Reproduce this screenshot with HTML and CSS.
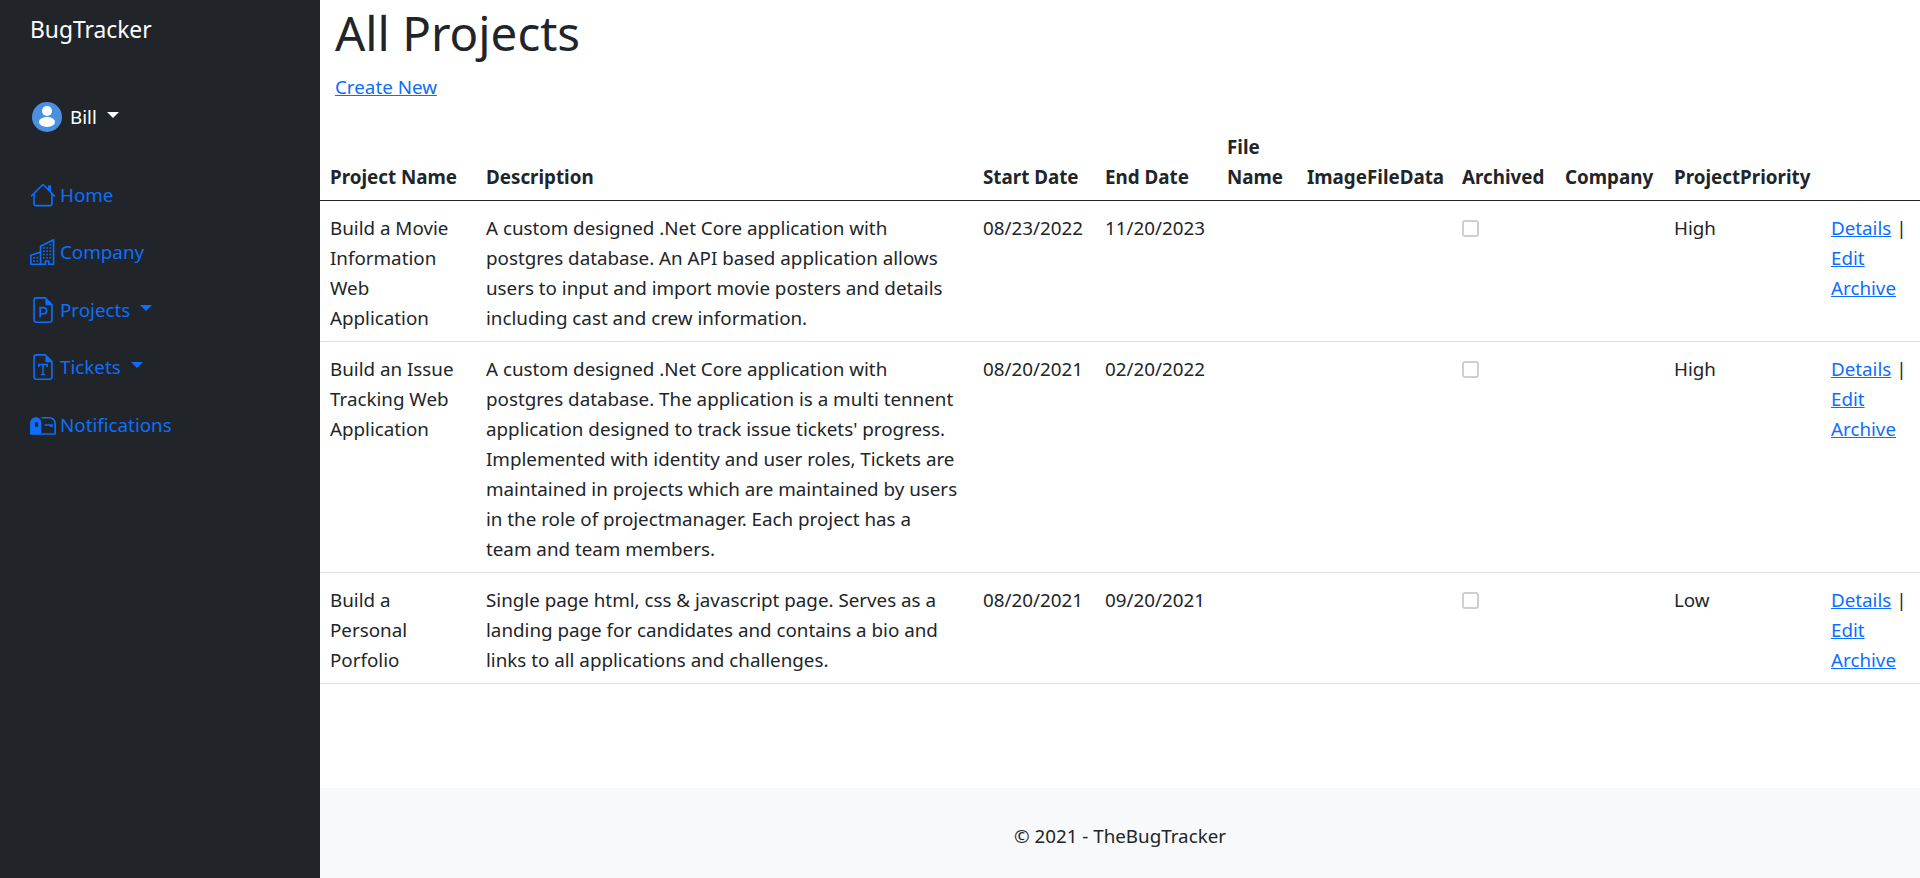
FILE: index.html
```html
<!DOCTYPE html>
<html lang="en">
<head>
    <meta charset="UTF-8">
    <title>All Projects - BugTracker</title>
    <link rel="stylesheet" href="styles.css">
</head>
<body>
    <div class="page">
        <nav class="sidebar">
            <div class="brand">BugTracker</div>
            <div class="user">
                <svg class="avatar" viewBox="0 0 30 30"><circle cx="15" cy="15" r="15" fill="#4a90e2"/><circle cx="15" cy="9" r="5" fill="#fff"/><ellipse cx="15" cy="20" rx="8" ry="5" fill="#fff"/></svg>
                <span>Bill</span><i class="caret"></i>
            </div>
            <ul class="menu">
                <li><svg viewBox="0 0 16 16" fill="currentColor"><path d="M8.707 1.500a1 1 0 0 0-1.414 0L.646 8.146a.5.5 0 0 0 .708.708L2 8.207V13.500A1.500 1.500 0 0 0 3.500 15h9a1.500 1.500 0 0 0 1.500-1.500V8.207l.646.647a.5.5 0 0 0 .708-.708L13 5.793V2.500a.5.5 0 0 0-.5-.5h-1a.5.5 0 0 0-.5.5v1.293L8.707 1.500ZM13 7.207V13.500a.5.5 0 0 1-.5.5h-9a.5.5 0 0 1-.5-.5V7.207l5-5 5 5Z"/></svg>Home</li>
                <li><svg viewBox="0 0 16 16" fill="currentColor"><path d="M14.763.075A.5.5 0 0 1 15 .5v15a.5.5 0 0 1-.5.5h-3a.5.5 0 0 1-.5-.5V14h-1v1.500a.5.5 0 0 1-.5.5h-9a.5.5 0 0 1-.5-.5V10a.5.5 0 0 1 .342-.474L6 7.640V4.500a.5.5 0 0 1 .276-.447l8-4a.5.5 0 0 1 .487.022ZM6 8.694 1 10.360V15h5V8.694ZM7 15h2v-1.500a.5.5 0 0 1 .5-.5h2a.5.5 0 0 1 .5.5V15h2V1.309l-7 3.500V15Z"/><path d="M2 11h1v1H2v-1Zm2 0h1v1H4v-1Zm-2 2h1v1H2v-1Zm2 0h1v1H4v-1Zm4-4h1v1H8V9Zm2 0h1v1h-1V9Zm-2 2h1v1H8v-1Zm2 0h1v1h-1v-1Zm2-2h1v1h-1V9Zm0 2h1v1h-1v-1ZM8 7h1v1H8V7Zm2 0h1v1h-1V7Zm2 0h1v1h-1V7ZM8 5h1v1H8V5Zm2 0h1v1h-1V5Zm2 0h1v1h-1V5Zm0-2h1v1h-1V3Z"/></svg>Company</li>
                <li><svg viewBox="0 0 16 16" fill="currentColor"><path d="M14 4.500V14a2 2 0 0 1-2 2H4a2 2 0 0 1-2-2V2a2 2 0 0 1 2-2h5.500L14 4.500ZM9.500 1H4a1 1 0 0 0-1 1v12a1 1 0 0 0 1 1h8a1 1 0 0 0 1-1V5H9.500V1Z"/><path d="M6.250 12.500V6.500H8.300a1.900 1.900 0 0 1 0 3.800H6.250" fill="none" stroke="currentColor"/></svg>Projects<i class="caret"></i></li>
                <li><svg viewBox="0 0 16 16" fill="currentColor"><path d="M14 4.500V14a2 2 0 0 1-2 2H4a2 2 0 0 1-2-2V2a2 2 0 0 1 2-2h5.500L14 4.500ZM9.500 1H4a1 1 0 0 0-1 1v12a1 1 0 0 0 1 1h8a1 1 0 0 0 1-1V5H9.500V1Z"/><path d="M5.400 8V6.500h5.200V8M8 6.500v6.200M6.700 12.700h2.600" fill="none" stroke="currentColor" stroke-width=".9"/></svg>Tickets<i class="caret"></i></li>
                <li><svg viewBox="0 0 16 16" fill="currentColor"><path fill-rule="evenodd" d="M4 3a4 4 0 0 0-4 4v6a1 1 0 0 0 1 1h6V7a4 4 0 0 0-3-4Zm0 3.200a1 1 0 0 1 1 1V9H3V7.200a1 1 0 0 1 1-1Z"/><path d="M6.600 3H12a4 4 0 0 1 4 4v6a1 1 0 0 1-1 1H7v-1h8V7a3 3 0 0 0-3-3H7.600a4.500 4.500 0 0 0-1-1Z"/><path d="M9 7.500h5v1.700h-1.300l-.8-.7H9Z"/></svg>Notifications</li>
            </ul>
        </nav>
        <div class="content">
            <main class="main">
                <h1>All Projects</h1>
                <p class="create"><a href="#">Create New</a></p>
                <table class="table">
                    <colgroup>
                        <col class="col-name">
                        <col class="col-desc">
                        <col class="col-date">
                        <col class="col-date">
                        <col class="col-file">
                        <col class="col-image">
                        <col class="col-archived">
                        <col class="col-company">
                        <col class="col-priority">
                        <col>
                    </colgroup>
                    <thead>
                        <tr>
                            <th>Project Name</th>
                            <th>Description</th>
                            <th>Start Date</th>
                            <th>End Date</th>
                            <th>File Name</th>
                            <th>ImageFileData</th>
                            <th>Archived</th>
                            <th>Company</th>
                            <th>ProjectPriority</th>
                            <th></th>
                        </tr>
                    </thead>
                    <tbody>
                        <tr>
                            <td>Build a Movie Information Web Application</td>
                            <td>A custom designed .Net Core application with postgres database. An API based application allows users to input and import movie posters and details including cast and crew information.</td>
                            <td>08/23/2022</td>
                            <td>11/20/2023</td>
                            <td></td>
                            <td></td>
                            <td><input type="checkbox" disabled></td>
                            <td></td>
                            <td>High</td>
                            <td><a href="#">Details</a> | <a href="#">Edit</a> <a href="#">Archive</a></td>
                        </tr>
                        <tr>
                            <td>Build an Issue Tracking Web Application</td>
                            <td>A custom designed .Net Core application with postgres database. The application is a multi tennent application designed to track issue tickets' progress. Implemented with identity and user roles, Tickets are maintained in projects which are maintained by users in the role of projectmanager. Each project has a team and team members.</td>
                            <td>08/20/2021</td>
                            <td>02/20/2022</td>
                            <td></td>
                            <td></td>
                            <td><input type="checkbox" disabled></td>
                            <td></td>
                            <td>High</td>
                            <td><a href="#">Details</a> | <a href="#">Edit</a> <a href="#">Archive</a></td>
                        </tr>
                        <tr>
                            <td>Build a Personal Porfolio</td>
                            <td>Single page html, css &amp; javascript page. Serves as a landing page for candidates and contains a bio and links to all applications and challenges.</td>
                            <td>08/20/2021</td>
                            <td>09/20/2021</td>
                            <td></td>
                            <td></td>
                            <td><input type="checkbox" disabled></td>
                            <td></td>
                            <td>Low</td>
                            <td><a href="#">Details</a> | <a href="#">Edit</a> <a href="#">Archive</a></td>
                        </tr>
                    </tbody>
                </table>
            </main>
            <footer class="footer">&copy; 2021 - TheBugTracker</footer>
        </div>
    </div>
</body>
</html>
```

FILE: styles.css
```css
* {
    box-sizing: border-box;
}
body {
    margin: 0;
    font-family: "Noto Sans", "Open Sans", sans-serif;
    font-size: 18.800px;
    line-height: 30px;
    color: #212529;
    background: #fff;
}
a {
    color: #0d6efd;
}
.page {
    display: flex;
    height: 878px;
}
.sidebar {
    width: 320px;
    flex-shrink: 0;
    background: #212529;
    color: #fff;
    padding: 14px 30px;
}
.brand {
    font-size: 22.800px;
    line-height: 32px;
}
.user {
    display: flex;
    align-items: center;
    margin-top: 56px;
    padding-left: 2px;
}
.avatar {
    width: 30px;
    height: 30px;
    margin-right: 8px;
}
.caret {
    display: inline-block;
    margin-left: 10px;
    margin-top: -4px;
    border-top: 6px solid currentColor;
    border-left: 6px solid transparent;
    border-right: 6px solid transparent;
}
.menu {
    list-style: none;
    margin: 34px 0 0;
    padding: 0;
    color: #0d6efd;
}
.menu li {
    display: flex;
    align-items: center;
    height: 57.500px;
}
.menu svg {
    width: 26px;
    height: 26px;
    margin-right: 4px;
}
.content {
    flex: 1;
    display: flex;
    flex-direction: column;
    min-width: 0;
}
.main {
    flex: 1;
}
h1 {
    margin: 7px 0 0 15px;
    font-size: 47.500px;
    font-weight: 400;
    line-height: 52px;
}
.create {
    margin: 13px 0 0 15px;
}
.table {
    width: 100%;
    table-layout: fixed;
    border-collapse: separate;
    border-spacing: 0;
    margin-top: 17px;
}
.col-name {
    width: 156px;
}
.col-desc {
    width: 497px;
}
.col-date {
    width: 122px;
}
.col-file {
    width: 80px;
}
.col-image {
    width: 155px;
}
.col-archived {
    width: 103px;
}
.col-company {
    width: 109px;
}
.col-priority {
    width: 157px;
}
.table th {
    text-align: left;
    vertical-align: bottom;
    padding: 13px 10px 8px;
    border-bottom: 1px solid #212529;
    font-weight: 700;
    white-space: nowrap;
}
.table th:nth-child(5) {
    white-space: normal;
}
.table td {
    vertical-align: top;
    padding: 12px 10px 8px;
    border-bottom: 1px solid #dee2e6;
}
.table td:nth-child(2) {
    padding-right: 14px;
}
.table input {
    appearance: none;
    display: block;
    width: 17px;
    height: 17px;
    margin: 7px 0 0;
    border: 2px solid #cfcfd3;
    border-radius: 3px;
    background: #fff;
}
.footer {
    height: 90px;
    padding-top: 6px;
    background: #f8f9fa;
    display: flex;
    align-items: center;
    justify-content: center;
}
```
